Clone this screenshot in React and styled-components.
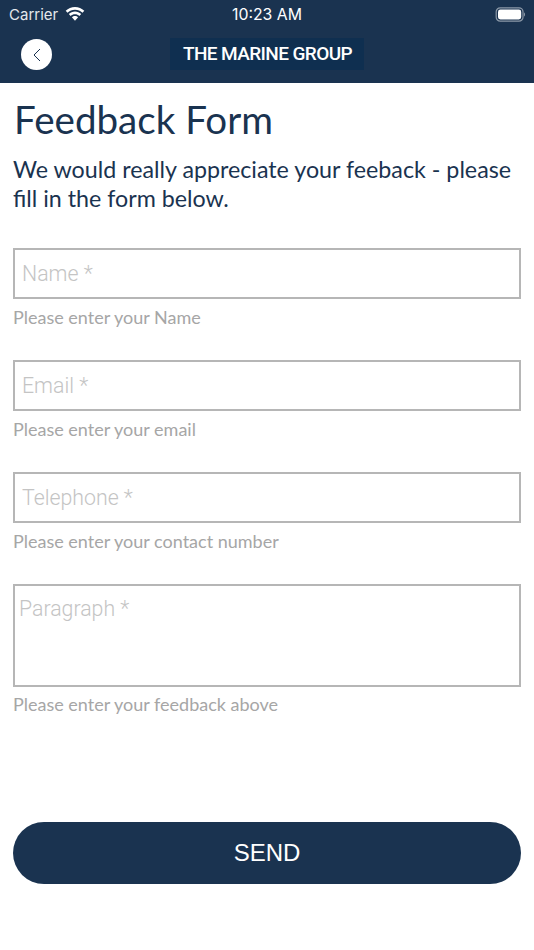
import React from "react";
import styled, { createGlobalStyle } from "styled-components";

const GlobalStyle = createGlobalStyle`
  html, body {
    margin: 0;
    padding: 0;
    background: #fff;
  }
`;

const Page = styled.div`
  width: 534px;
  height: 950px;
  overflow: hidden;
  display: flex;
  flex-direction: column;
  background: #fff;
  font-family: "Lato", sans-serif;
`;

const Header = styled.header`
  height: 83px;
  flex: none;
  background: #1a3350;
  display: flex;
  flex-direction: column;
`;

const StatusBar = styled.div`
  height: 28px;
  padding: 0 9px;
  display: grid;
  grid-template-columns: 1fr auto 1fr;
  align-items: center;
  color: #fff;
  font-family: "Inter", "Liberation Sans", sans-serif;
  font-size: 15px;
`;

const Carrier = styled.div`
  display: flex;
  align-items: center;
  gap: 7px;
  color: #e4e8ec;
`;

const Clock = styled.span`
  font-size: 15.8px;
`;

const Battery = styled.svg`
  justify-self: end;
`;

const NavBar = styled.div`
  position: relative;
  height: 55px;
  display: flex;
  justify-content: center;
  padding-top: 10px;
  box-sizing: border-box;
`;

const BackButton = styled.button`
  position: absolute;
  left: 21px;
  top: 11px;
  width: 31px;
  height: 31px;
  padding: 0;
  border: 0;
  border-radius: 50%;
  background: #fff;
  display: flex;
  align-items: center;
  justify-content: center;
`;

const Logo = styled.div`
  width: 194px;
  height: 32px;
  padding-left: 1px;
  box-sizing: border-box;
  background: #0f2f50;
  color: #fff;
  font-family: "Roboto", sans-serif;
  font-weight: 500;
  font-size: 19px;
  letter-spacing: -0.6px;
  line-height: 32px;
  text-align: center;
  white-space: nowrap;
`;

const Content = styled.main`
  flex: 1;
  padding: 0 13px;
  display: flex;
  flex-direction: column;
`;

const Title = styled.h1`
  margin: 12px 0 0 1px;
  color: #1a3350;
  font-weight: 400;
  font-size: 38.6px;
  line-height: 48px;
`;

const Intro = styled.p`
  margin: 12px 0 35px 0;
  color: #1a3350;
  font-size: 23.25px;
  line-height: 29px;
`;

const Field = styled.div`
  display: flex;
  flex-direction: column;
  margin-bottom: ${(p) => p.$gap}px;
`;

const TextInput = styled.input`
  box-sizing: border-box;
  width: 100%;
  height: 51px;
  padding: 0 7px;
  border: 2px solid #b6b6b6;
  border-radius: 0;
  outline: none;
  font-family: "Roboto", sans-serif;
  font-weight: 300;
  font-size: 21.3px;
  &::placeholder {
    color: #c4c4c4;
    opacity: 1;
  }
`;

const TextArea = styled.textarea`
  box-sizing: border-box;
  display: block;
  width: 100%;
  height: 103px;
  padding: 9px 4px;
  border: 2px solid #b6b6b6;
  border-radius: 0;
  outline: none;
  resize: none;
  font-family: "Roboto", sans-serif;
  font-weight: 300;
  font-size: 21.3px;
  line-height: 28px;
  &::placeholder {
    color: #c4c4c4;
    opacity: 1;
  }
`;

const Hint = styled.span`
  margin-top: ${(p) => p.$offset}px;
  color: #a6a6a6;
  font-size: 18px;
  line-height: 24px;
`;

const SendButton = styled.button`
  width: 100%;
  height: 62px;
  margin-top: 106px;
  border: 0;
  border-radius: 31px;
  background: #1a3350;
  color: #fff;
  font-family: "Liberation Sans", sans-serif;
  font-size: 24px;
`;

const WifiIcon = () => (
  <svg width="20" height="15" viewBox="0 0 20 15" fill="#fff">
    <path d="M10 2.700c2.900 0 5.500 1.100 7.500 3L19.300 3.800C16.800 1.400 13.500 0 10 0S3.200 1.400.7 3.800l1.800 1.900c2-1.900 4.600-3 7.500-3z" />
    <path d="M10 7.300c1.700 0 3.200.6 4.400 1.700l1.800-1.900C14.500 5.500 12.400 4.600 10 4.600S5.500 5.500 3.800 7.100L5.600 9C6.800 7.900 8.300 7.300 10 7.300z" />
    <path d="M10 9.100c-1.200 0-2.300.5-3.100 1.200L10 13.800l3.100-3.500c-.8-.7-1.900-1.200-3.100-1.200z" />
  </svg>
);

const fields = [
  { placeholder: "Name *", hint: "Please enter your Name" },
  { placeholder: "Email *", hint: "Please enter your email" },
  { placeholder: "Telephone *", hint: "Please enter your contact number" },
];

const App = () => {
  return (
    <Page>
      <GlobalStyle />
      <Header>
        <StatusBar>
          <Carrier>
            Carrier
            <WifiIcon />
          </Carrier>
          <Clock>10:23 AM</Clock>
          <Battery width="30" height="15" viewBox="0 0 30 15">
            <rect x="1.200" y="0.800" width="26.800" height="13.400" rx="4" fill="none" stroke="#8c99a8" strokeWidth="1.200" />
            <rect x="3" y="2.600" width="23.200" height="9.800" rx="2.400" fill="#fff" />
            <path d="M29 5.500c.6.300 1 1.100 1 2s-.4 1.700-1 2z" fill="#8c99a8" />
          </Battery>
        </StatusBar>
        <NavBar>
          <BackButton aria-label="Back">
            <svg width="10" height="16" viewBox="0 0 10 16" fill="none" stroke="#1a3350" strokeWidth="1">
              <path d="M8 2L2 8l6 6" />
            </svg>
          </BackButton>
          <Logo>THE MARINE GROUP</Logo>
        </NavBar>
      </Header>
      <Content>
        <Title>Feedback Form</Title>
        <Intro>We would really appreciate your feeback - please fill in the form below.</Intro>
        {fields.map((field) => (
          <Field key={field.placeholder} $gap={31}>
            <TextInput placeholder={field.placeholder} />
            <Hint $offset={6}>{field.hint}</Hint>
          </Field>
        ))}
        <Field $gap={0}>
          <TextArea placeholder="Paragraph *" />
          <Hint $offset={5}>Please enter your feedback above</Hint>
        </Field>
        <SendButton>SEND</SendButton>
      </Content>
    </Page>
  );
};

export default App;
